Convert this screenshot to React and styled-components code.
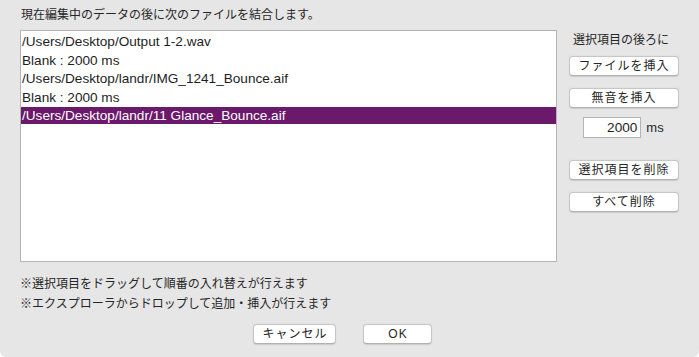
import React from "react";
import styled, { createGlobalStyle } from "styled-components";

const Global = createGlobalStyle`
  html, body { margin: 0; padding: 0; background: #ffffff; }
  body { font-family: "Liberation Sans", "Noto Sans CJK JP", sans-serif; }
  * { box-sizing: border-box; }
`;

const Dialog = styled.div`
  width: 699px;
  height: 357px;
  background: #e6e6e6;
  border-radius: 0 0 6px 6px;
  padding: 7px 20px 0 20px;
  color: #262626;
  display: flex;
  flex-direction: column;
`;

const Header = styled.div`
  font-size: 12px;
  line-height: 16px;
  height: 16px;
  padding-left: 1px;
  margin-bottom: 7px;
`;

const Main = styled.div`
  display: flex;
`;

const List = styled.div`
  width: 537px;
  height: 232px;
  background: #ffffff;
  border: 1px solid #b4b4b4;
  padding-top: 2px;
  display: flex;
  flex-direction: column;
  gap: 1.5px;
`;

const Row = styled.div`
  height: 17px;
  line-height: 17px;
  font-size: 13.6px;
  padding-left: 1px;
  white-space: nowrap;
  color: ${(p) => (p.$selected ? "#ffffff" : "#1e1e1e")};
  background: ${(p) => (p.$selected ? "#6b196a" : "transparent")};
`;

const Sidebar = styled.div`
  flex: 1;
  display: flex;
  flex-direction: column;
  align-items: center;
  padding-left: 11px;
`;

const SideLabel = styled.div`
  font-size: 12px;
  line-height: 16px;
  margin-top: 2px;
  margin-right: 5px;
`;

const Button = styled.button`
  width: ${(p) => p.$w}px;
  height: 20px;
  margin-top: ${(p) => p.$mt || 0}px;
  background: #ffffff;
  border: 1px solid #c6c6c6;
  border-bottom-color: #b0b0b0;
  border-radius: 4px;
  box-shadow: 0 0.5px 1px rgba(0, 0, 0, 0.12);
  font-family: "Liberation Sans", "Noto Sans CJK JP", sans-serif;
  font-size: 12px;
  line-height: 18px;
  color: #262626;
  padding: 0 0 0 1px;
  letter-spacing: 1px;
  text-align: center;
`;

const InputRow = styled.div`
  display: flex;
  align-items: center;
  gap: 5px;
  margin-top: 9px;
`;

const NumberBox = styled.div`
  width: 58px;
  height: 21px;
  background: #ffffff;
  border: 1px solid #b4b4b4;
  font-size: 13.6px;
  line-height: 19px;
  text-align: right;
  padding-right: 3px;
  color: #1e1e1e;
`;

const Unit = styled.span`
  font-size: 13px;
  color: #262626;
`;

const Notes = styled.div`
  margin-top: 12px;
  font-size: 12px;
  line-height: 20px;
`;

const Footer = styled.div`
  display: flex;
  justify-content: center;
  gap: 27px;
  margin-top: 10px;
  padding-right: 14px;
`;

const rows = [
  "/Users/Desktop/Output 1-2.wav",
  "Blank : 2000 ms",
  "/Users/Desktop/landr/IMG_1241_Bounce.aif",
  "Blank : 2000 ms",
  "/Users/Desktop/landr/11 Glance_Bounce.aif",
];

export default function App() {
  return (
    <>
      <Global />
      <Dialog>
        <Header>現在編集中のデータの後に次のファイルを結合します。</Header>
        <Main>
          <List>
            {rows.map((r, i) => (
              <Row key={i} $selected={i === 4}>
                {r}
              </Row>
            ))}
          </List>
          <Sidebar>
            <SideLabel>選択項目の後ろに</SideLabel>
            <Button $w={110} $mt={8}>ファイルを挿入</Button>
            <Button $w={110} $mt={12}>無音を挿入</Button>
            <InputRow>
              <NumberBox>2000</NumberBox>
              <Unit>ms</Unit>
            </InputRow>
            <Button $w={110} $mt={22}>選択項目を削除</Button>
            <Button $w={110} $mt={12}>すべて削除</Button>
          </Sidebar>
        </Main>
        <Notes>
          <div>※選択項目をドラッグして順番の入れ替えが行えます</div>
          <div>※エクスプローラからドロップして追加・挿入が行えます</div>
        </Notes>
        <Footer>
          <Button $w={83}>キャンセル</Button>
          <Button $w={69}>OK</Button>
        </Footer>
      </Dialog>
    </>
  );
}
